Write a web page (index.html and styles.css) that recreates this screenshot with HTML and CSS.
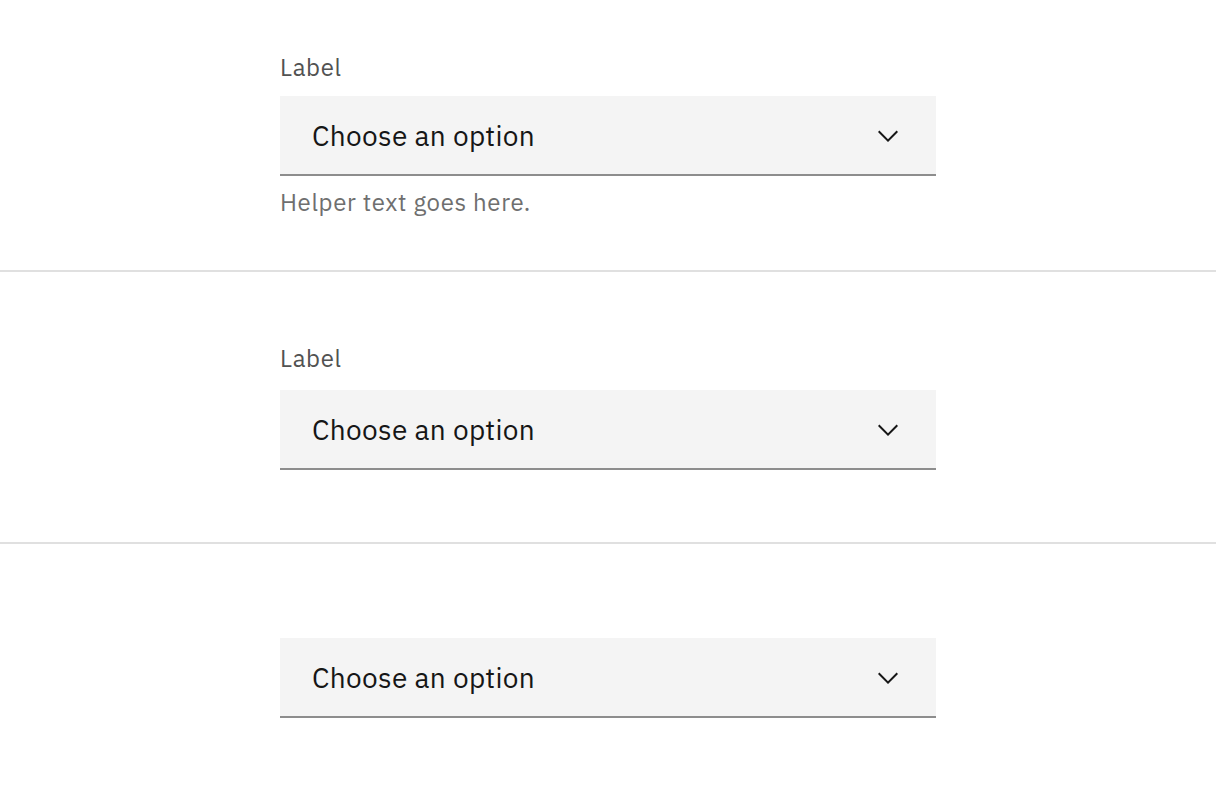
FILE: index.html
```html
<!DOCTYPE html>
<html lang="en">
<head>
<meta charset="utf-8">
<title>Select</title>
<link rel="stylesheet" href="styles.css">
</head>
<body>
<main class="page">
  <section class="demo">
    <div class="field field--helper">
      <label class="field-label" for="s1">Label</label>
      <div class="select">
        <select id="s1" class="select-input"><option>Choose an option</option></select>
        <svg class="chevron" viewBox="0 0 16 16" width="32" height="32" aria-hidden="true"><path d="M8 11L3 6 3.7 5.3 8 9.6 12.3 5.3 13 6z"/></svg>
      </div>
      <div class="helper">Helper text goes here.</div>
    </div>
  </section>
  <section class="demo">
    <div class="field">
      <label class="field-label" for="s2">Label</label>
      <div class="select">
        <select id="s2" class="select-input"><option>Choose an option</option></select>
        <svg class="chevron" viewBox="0 0 16 16" width="32" height="32" aria-hidden="true"><path d="M8 11L3 6 3.7 5.3 8 9.6 12.3 5.3 13 6z"/></svg>
      </div>
    </div>
  </section>
  <section class="demo">
    <div class="field">
      <div class="select">
        <select id="s3" class="select-input" aria-label="Select"><option>Choose an option</option></select>
        <svg class="chevron" viewBox="0 0 16 16" width="32" height="32" aria-hidden="true"><path d="M8 11L3 6 3.7 5.3 8 9.6 12.3 5.3 13 6z"/></svg>
      </div>
    </div>
  </section>
</main>
</body>
</html>
```
FILE: styles.css
```css
* { box-sizing: border-box; }
html, body { margin: 0; padding: 0; background: #ffffff; }
body {
  font-family: "IBM Plex Sans", "Noto Sans", "Helvetica Neue", Arial, sans-serif;
  color: #161616;
  overflow: hidden;
}
.page { display: flex; flex-direction: column; }
.demo {
  height: 272px;
  display: flex;
  align-items: center;
  justify-content: center;
  border-bottom: 2px solid #e0e0e0;
  flex: none;
}
.demo:last-child { border-bottom: none; height: 270px; }
.field { width: 656px; display: flex; flex-direction: column; padding-bottom: 2px; }
.field-label {
  font-size: 24px;
  line-height: 32px;
  letter-spacing: 0.64px;
  color: #525252;
  margin-bottom: 16px;
}
.field--helper .field-label { margin-top: 3px; margin-bottom: 13px; }
.select { position: relative; height: 80px; }
.select-input {
  appearance: none;
  -webkit-appearance: none;
  width: 100%;
  height: 80px;
  margin: 0;
  border: none;
  border-bottom: 2px solid #8d8d8d;
  border-radius: 0;
  background: #f4f4f4;
  color: #161616;
  font-family: inherit;
  font-size: 28px;
  line-height: 40px;
  letter-spacing: 0.32px;
  padding: 1px 96px 0 32px;
  outline: none;
}
.chevron {
  position: absolute;
  right: 32px;
  top: 24px;
  fill: #161616;
  pointer-events: none;
}
.helper {
  margin-top: 10px;
  margin-bottom: 2px;
  font-size: 24px;
  line-height: 32px;
  letter-spacing: 0.64px;
  color: #6f6f6f;
}
```
